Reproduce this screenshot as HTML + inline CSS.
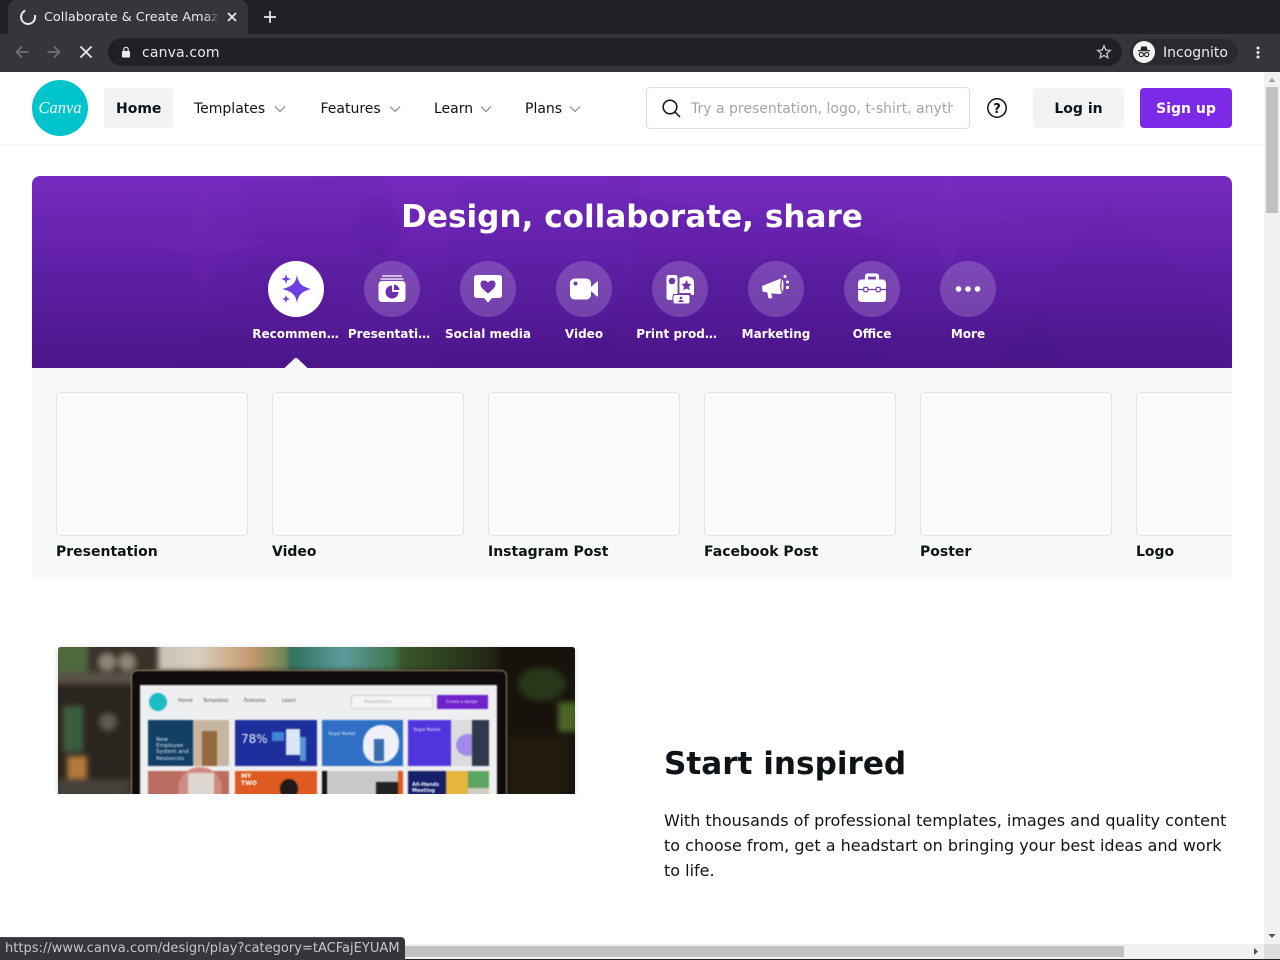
<!DOCTYPE html>
<html><head><meta charset="utf-8"><title>Canva</title>
<style>
*{box-sizing:border-box}
html,body{margin:0;padding:0;width:1280px;height:960px;overflow:hidden;background:#fff;font-family:"DejaVu Sans","Liberation Sans",sans-serif;color:#0e1318}
.a{position:absolute}
.t{position:absolute;white-space:nowrap;line-height:20px}
svg{position:absolute;overflow:visible}
.nav{font-size:14px;top:98px;color:#0e1318;line-height:20px;padding-top:1px}
.ic{position:absolute;top:261px;width:56px;height:56px;border-radius:50%;background:rgba(255,255,255,.18)}
.lb{position:absolute;top:325px;width:96px;text-align:center;font-size:12px;font-weight:700;color:#fff;line-height:18px;white-space:nowrap}
.card{position:absolute;top:392px;width:192px;height:144px;border:1px solid #e1e3e7;border-radius:4px;background:#f9fafa}
.cl{position:absolute;font-size:14px;font-weight:700;line-height:20px;color:#0e1318;white-space:nowrap}
</style></head><body>

<!-- browser chrome -->
<div class="a" style="left:0;top:0;width:1280px;height:34px;background:#202124"></div>
<div class="a" style="left:0;top:34px;width:1280px;height:38px;background:#35363a"></div>
<div class="a" style="left:8px;top:0;width:240px;height:34px;background:#35363a;border-radius:8px 8px 0 0"></div>
<svg style="left:20px;top:9px" width="16" height="16" viewBox="0 0 16 16"><path d="M 5.2 1.600 A 7 7 0 1 0 14.800 6" fill="none" stroke="#e8eaed" stroke-width="2"/></svg>
<div class="t" style="left:44px;top:8px;width:175px;overflow:hidden;font-size:12.800px;color:#e8eaed">Collaborate &amp; Create Amaz</div>
<div class="a" style="left:204px;top:6px;width:16px;height:20px;background:linear-gradient(90deg,rgba(53,54,58,0),#35363a)"></div>
<svg style="left:226px;top:11px" width="12" height="12" viewBox="0 0 12 12"><path d="M2 2L10 10M10 2L2 10" stroke="#e8eaed" stroke-width="1.700"/></svg>
<svg style="left:263px;top:10px" width="14" height="14" viewBox="0 0 14 14"><path d="M7 1V13M1 7H13" stroke="#e8eaed" stroke-width="1.700"/></svg>
<svg style="left:14px;top:44px" width="16" height="16" viewBox="0 0 16 16"><path d="M14.500 8H2.500M8 2.500L2.500 8L8 13.500" fill="none" stroke="#6f7175" stroke-width="1.700"/></svg>
<svg style="left:46px;top:44px" width="16" height="16" viewBox="0 0 16 16"><path d="M1.500 8H13.500M8 2.500L13.500 8L8 13.500" fill="none" stroke="#6f7175" stroke-width="1.700"/></svg>
<svg style="left:78px;top:44px" width="16" height="16" viewBox="0 0 16 16"><path d="M2.500 2.500L13.500 13.500M13.500 2.500L2.500 13.500" fill="none" stroke="#e8eaed" stroke-width="1.800"/></svg>
<div class="a" style="left:108px;top:38px;width:1014px;height:28px;background:#202124;border-radius:14px"></div>
<svg style="left:120px;top:46px" width="12" height="12" viewBox="0 0 12 12"><rect x="2" y="5" width="8" height="6.500" rx="1" fill="#e8eaed"/><path d="M3.800 5V3.500a2.200 2.200 0 0 1 4.400 0V5" fill="none" stroke="#e8eaed" stroke-width="1.200"/></svg>
<div class="t" style="left:142px;top:43px;font-size:14px;color:#e8eaed;letter-spacing:.15px">canva.com</div>
<svg style="left:1096px;top:44px" width="16" height="16" viewBox="0 0 16 16"><path d="M8 1.800L9.800 6L14.300 6.400L10.900 9.400L11.900 13.800L8 11.500L4.100 13.800L5.100 9.400L1.700 6.400L6.200 6Z" fill="none" stroke="#c4c6c9" stroke-width="1.300"/></svg>
<div class="a" style="left:1130px;top:39px;width:108px;height:26px;background:#292a2d;border-radius:13px"></div>
<div class="a" style="left:1133px;top:41px;width:22px;height:22px;background:#f1f3f4;border-radius:50%"></div>
<svg style="left:1133px;top:41px" width="22" height="22" viewBox="0 0 22 22"><path d="M7.500 9L8.300 5.500H13.700L14.500 9Z" fill="#202124"/><path d="M5 9.700H17" stroke="#202124" stroke-width="1.200"/><circle cx="8.300" cy="13.500" r="2.100" fill="none" stroke="#202124" stroke-width="1.100"/><circle cx="13.700" cy="13.500" r="2.100" fill="none" stroke="#202124" stroke-width="1.100"/><path d="M10.400 13.200H11.600" stroke="#202124"/></svg>
<div class="t" style="left:1163px;top:43px;font-size:14px;color:#e8eaed">Incognito</div>
<svg style="left:1256px;top:46px" width="4" height="14" viewBox="0 0 4 14"><circle cx="2" cy="2" r="1.500" fill="#e8eaed"/><circle cx="2" cy="6.500" r="1.500" fill="#e8eaed"/><circle cx="2" cy="11" r="1.500" fill="#e8eaed"/></svg>

<!-- header -->
<div class="a" style="left:0;top:72px;width:1264px;height:74px;background:#fff;border-bottom:2px solid #f6f7f8"></div>
<div class="a" style="left:32px;top:80px;width:56px;height:56px;border-radius:50%;background:#00c4cc"></div>
<div class="t" style="left:32px;top:98px;width:56px;text-align:center;font-family:'Liberation Serif',serif;font-style:italic;font-size:16.500px;color:#fff">Canva</div>
<div class="a" style="left:104px;top:88px;width:69px;height:40px;background:#f2f3f5;border-radius:4px"></div>
<div class="t nav" style="left:116px;font-weight:700">Home</div>
<div class="t nav" style="left:194px">Templates</div>
<svg style="left:274px;top:105px" width="12" height="8" viewBox="0 0 12 8"><path d="M1 1.500L6 6.500L11 1.500" fill="none" stroke="#8b8d91" stroke-width="1.200"/></svg>
<div class="t nav" style="left:320.500px">Features</div>
<svg style="left:389px;top:105px" width="12" height="8" viewBox="0 0 12 8"><path d="M1 1.500L6 6.500L11 1.500" fill="none" stroke="#8b8d91" stroke-width="1.200"/></svg>
<div class="t nav" style="left:434px">Learn</div>
<svg style="left:480px;top:105px" width="12" height="8" viewBox="0 0 12 8"><path d="M1 1.500L6 6.500L11 1.500" fill="none" stroke="#8b8d91" stroke-width="1.200"/></svg>
<div class="t nav" style="left:525px">Plans</div>
<svg style="left:569px;top:105px" width="12" height="8" viewBox="0 0 12 8"><path d="M1 1.500L6 6.500L11 1.500" fill="none" stroke="#8b8d91" stroke-width="1.200"/></svg>
<div class="a" style="left:646px;top:87px;width:324px;height:42px;border:1px solid #d9dbde;border-radius:4px;background:#fff"></div>
<svg style="left:660px;top:97px" width="22" height="22" viewBox="0 0 22 22"><circle cx="10" cy="10" r="6.800" fill="none" stroke="#0e1318" stroke-width="1.500"/><path d="M15 15L20 20" stroke="#0e1318" stroke-width="1.500"/></svg>
<div class="t" style="left:691px;top:99px;width:262px;overflow:hidden;font-size:14px;color:#a3a5a9">Try a presentation, logo, t-shirt, anything</div>
<svg style="left:986px;top:97px" width="22" height="22" viewBox="0 0 22 22"><circle cx="11" cy="11" r="9.200" fill="none" stroke="#0e1318" stroke-width="1.500"/><text x="11" y="15.800" text-anchor="middle" font-size="13" font-weight="700" font-family="DejaVu Sans" fill="#0e1318">?</text></svg>
<div class="a" style="left:1033px;top:88px;width:91px;height:40px;background:#f2f3f5;border-radius:4px"></div>
<div class="t" style="left:1033px;top:99px;width:91px;text-align:center;font-size:14px;font-weight:700">Log in</div>
<div class="a" style="left:1140px;top:88px;width:92px;height:40px;background:#7d2ae8;border-radius:4px"></div>
<div class="t" style="left:1140px;top:99px;width:92px;text-align:center;font-size:14px;font-weight:700;color:#fff">Sign up</div>

<!-- hero -->
<div class="a" style="left:32px;top:176px;width:1200px;height:192px;border-radius:8px 8px 0 0;overflow:hidden;background:linear-gradient(180deg,#762bc0 0%,#6120a8 45%,#4c1589 100%)">
<svg style="left:0;top:0" width="1200" height="192" viewBox="0 0 1200 192">
<path d="M171 5L181 55L245 67L181 79L171 135L161 79L110 67L161 55Z" fill="#8a3fd0" opacity=".08"/>
<path d="M210 5L355 0L375 100L300 140L210 190H140L215 110Z" fill="#4a1590" opacity=".08"/>
<ellipse cx="345" cy="50" rx="24" ry="30" fill="#40107f" opacity=".08"/>
<path d="M425 5L610 0L580 190H400Z" fill="#3f1080" opacity=".05"/>
<path d="M600 20L865 65L850 190H540L600 100Z" fill="#3f1080" opacity=".08"/>
<path d="M916 2L930 30L990 41L930 52L916 110L902 52L850 41L902 30Z" fill="#9a52dd" opacity=".06"/>
<path d="M1075 25L1000 120L830 150L820 190H1190V130Z" fill="#3f1080" opacity=".04"/>
<path d="M1010 130L1030 190H960Z" fill="#30086a" opacity=".08"/>
</svg></div>
<div class="t" style="left:32px;top:197px;width:1200px;text-align:center;line-height:40px;font-size:31.100px;font-weight:700;color:#fff">Design, collaborate, share</div>

<div class="ic" style="left:268px;background:#fff"></div>
<div class="ic" style="left:364px"></div>
<div class="ic" style="left:460px"></div>
<div class="ic" style="left:556px"></div>
<div class="ic" style="left:652px"></div>
<div class="ic" style="left:748px"></div>
<div class="ic" style="left:844px"></div>
<div class="ic" style="left:940px"></div>

<svg style="left:280px;top:273px" width="32" height="32" viewBox="0 0 32 32"><path d="M17 1.500C18 9.500 21 13.500 31 16C21 18.500 18 22.500 17 30.500C16 22.500 13 18.500 2 16C13 13.500 16 9.500 17 1.500Z" fill="#6d3fe0"/><path d="M6 1L7.200 4.800L11 6L7.200 7.200L6 11L4.800 7.200L1 6L4.800 4.800Z" fill="#6d3fe0"/><path d="M6 22L7.100 25L10 26L7.100 27L6 30L4.900 27L2 26L4.900 25Z" fill="#6d3fe0"/></svg>
<svg style="left:376px;top:273px" width="32" height="32" viewBox="0 0 32 32"><path d="M6 3H26M4.500 6H27.500" stroke="#fff" stroke-width="1.300"/><rect x="2.500" y="8" width="27" height="21" rx="3.500" fill="#fff"/><path d="M16 12.500A6.500 6.500 0 1 0 22.500 19H16Z" fill="#6d2fae"/><path d="M18 11.500A6 6 0 0 1 23.500 17H18Z" fill="#6d2fae"/></svg>
<svg style="left:472px;top:273px" width="32" height="32" viewBox="0 0 32 32"><path d="M5 2H27Q30 2 30 5V22Q30 25 27 25H20L16 29.500L12 25H5Q2 25 2 22V5Q2 2 5 2Z" fill="#fff"/><path d="M16 20.500C11 16.500 8.500 14 8.500 11Q8.500 7.500 12 7.500Q14.800 7.500 16 10Q17.200 7.500 20 7.500Q23.500 7.500 23.500 11C23.500 14 21 16.500 16 20.500Z" fill="#7136ad"/></svg>
<svg style="left:568px;top:273px" width="32" height="32" viewBox="0 0 32 32"><rect x="2" y="5.500" width="21" height="21" rx="4.500" fill="#fff"/><path d="M23 14L29 8.500Q30 8 30 9.500V22.500Q30 24 29 23.500L23 18Z" fill="#fff"/><circle cx="7.500" cy="10.500" r="2" fill="#7136ad"/></svg>
<svg style="left:664px;top:273px" width="32" height="32" viewBox="0 0 32 32"><path d="M5 2H11Q13.500 2 13.500 4.500V21H9V27H5Q2.500 27 2.500 24.500V4.500Q2.500 2 5 2Z" fill="#fff"/><circle cx="8" cy="8" r="3.300" fill="#7136ad"/><path d="M16 5Q24 1.500 28 5Q30 7 30 10V22H27V20H15.500V6Q15.500 5 16 5Z" fill="#fff"/><path d="M22.500 6.800L24 10.500L27.500 11L25 13.600L25.700 17.200L22.500 15.500L19.300 17.200L20 13.600L17.500 11L21 10.500Z" fill="#7136ad"/><rect x="9" y="21.500" width="17" height="9.500" rx="2" fill="#fff" stroke="#7136ad" stroke-width="1"/><circle cx="17" cy="25" r="1.400" fill="#7136ad"/><path d="M14.500 29H19.500V28Q17 26 14.500 28Z" fill="#7136ad"/></svg>
<svg style="left:760px;top:273px" width="32" height="32" viewBox="0 0 32 32"><path d="M2 13L21 5.500L24 19L20 21L11 20.500L12.500 24.500Q10.500 26.500 8 24.500L7.500 19.500L2.500 18.500Z" fill="#fff"/><ellipse cx="22.500" cy="12.500" rx="2.300" ry="7.500" fill="#7136ad"/><ellipse cx="22.500" cy="12.500" rx="1" ry="6" fill="#fff"/><circle cx="25" cy="3.500" r="1.500" fill="#fff"/><circle cx="27.500" cy="9" r="1.500" fill="#fff"/><rect x="26" y="13" width="3" height="3" fill="#fff"/></svg>
<svg style="left:856px;top:273px" width="32" height="32" viewBox="0 0 32 32"><path d="M10.500 7V3.500Q10.500 2 12.500 2H19.500Q21.500 2 21.500 3.500V7" fill="none" stroke="#fff" stroke-width="3.200"/><rect x="2" y="6.500" width="28" height="22.500" rx="3.500" fill="#fff"/><path d="M2 16.500H30" stroke="#7136ad" stroke-width="1.200"/><rect x="7.800" y="14.300" width="4" height="4.500" rx="1" fill="#fff" stroke="#7136ad" stroke-width="1.100"/><rect x="20.200" y="14.300" width="4" height="4.500" rx="1" fill="#fff" stroke="#7136ad" stroke-width="1.100"/></svg>
<svg style="left:952px;top:273px" width="32" height="32" viewBox="0 0 32 32"><circle cx="6.500" cy="16" r="2.800" fill="#fff"/><circle cx="16" cy="16" r="2.800" fill="#fff"/><circle cx="25.500" cy="16" r="2.800" fill="#fff"/></svg>

<div class="lb" style="left:247.500px">Recommen…</div>
<div class="lb" style="left:341px">Presentati…</div>
<div class="lb" style="left:440px">Social media</div>
<div class="lb" style="left:536px">Video</div>
<div class="lb" style="left:628.500px">Print prod…</div>
<div class="lb" style="left:728px">Marketing</div>
<div class="lb" style="left:824px">Office</div>
<div class="lb" style="left:920px">More</div>

<!-- panel -->
<div class="a" style="left:32px;top:368px;width:1200px;height:212px;background:#f8f9f9;border-radius:0 0 8px 8px;overflow:hidden">
<div class="card" style="left:24px;top:24px"></div>
<div class="card" style="left:240px;top:24px"></div>
<div class="card" style="left:456px;top:24px"></div>
<div class="card" style="left:672px;top:24px"></div>
<div class="card" style="left:888px;top:24px"></div>
<div class="card" style="left:1104px;top:24px"></div>
<div class="cl" style="left:24px;top:174px">Presentation</div>
<div class="cl" style="left:240px;top:174px">Video</div>
<div class="cl" style="left:456px;top:174px">Instagram Post</div>
<div class="cl" style="left:672px;top:174px">Facebook Post</div>
<div class="cl" style="left:888px;top:174px">Poster</div>
<div class="cl" style="left:1104px;top:174px">Logo</div>
</div>
<svg style="left:284px;top:357px" width="24" height="11" viewBox="0 0 24 11"><path d="M0.500 11L10.500 1.500Q12 0.300 13.500 1.500L23.500 11Z" fill="#f8f9f9"/></svg>

<!-- laptop image -->
<div class="a" style="left:40px;top:630px;width:555px;height:164px;overflow:hidden">
<div class="a" style="left:18px;top:18px;width:517px;height:160px;border-radius:3px;box-shadow:0 0 6px rgba(0,0,0,.16)"></div>
<div class="a" style="left:18px;top:17px;width:517px;height:147px;overflow:hidden;border-radius:3px 3px 0 0;background:#17110c">
 <div class="a" style="left:0;top:0;width:517px;height:147px;filter:blur(3px)">
  <div class="a" style="left:-6px;top:-6px;width:110px;height:160px;background:#3a322a"></div>
  <div class="a" style="left:-6px;top:-6px;width:36px;height:32px;background:#4e6a3c"></div>
  <div class="a" style="left:-6px;top:25px;width:110px;height:12px;background:#5a5248"></div>
  <div class="a" style="left:-6px;top:37px;width:110px;height:120px;background:#2b251f"></div>
  <div class="a" style="left:5px;top:59px;width:20px;height:46px;background:#3a5f3e"></div>
  <div class="a" style="left:9px;top:109px;width:20px;height:30px;background:#b57a3a"></div>
  <div class="a" style="left:-2px;top:132px;width:74px;height:20px;background:#45403a"></div>
  <div class="a" style="left:40px;top:6px;width:18px;height:18px;border-radius:50%;background:#8c8676"></div>
  <div class="a" style="left:60px;top:6px;width:18px;height:18px;border-radius:50%;background:#8c8676"></div>
  <div class="a" style="left:41px;top:66px;width:18px;height:18px;border-radius:50%;background:#5e5a50"></div>
  <div class="a" style="left:100px;top:-6px;width:130px;height:30px;background:linear-gradient(90deg,#c8c2b5,#d8cfc0 30%,#c79c70 70%,#6b8452)"></div>
  <div class="a" style="left:230px;top:-6px;width:110px;height:30px;background:linear-gradient(90deg,#2e6e5c,#5b9c9d 50%,#3e7346)"></div>
  <div class="a" style="left:340px;top:-6px;width:110px;height:30px;background:linear-gradient(90deg,#3a5a2b,#1e1c10)"></div>
  <div class="a" style="left:440px;top:-6px;width:90px;height:165px;background:#17120b"></div>
  <div class="a" style="left:460px;top:20px;width:48px;height:34px;border-radius:50%;background:#26371a"></div>
  <div class="a" style="left:500px;top:55px;width:20px;height:30px;background:#4a6426"></div>
  <div class="a" style="left:450px;top:90px;width:60px;height:60px;background:#221a0e"></div>
 </div>
 <div class="a" style="left:0;top:0;width:517px;height:147px;filter:blur(.8px)">
  <div class="a" style="left:73px;top:23px;width:376px;height:130px;border:1.500px solid #a38c6c;border-radius:6px 6px 0 0;background:#100b0a"></div>
  <div class="a" style="left:82px;top:38px;width:357px;height:112px;background:#eeeff0"></div>
  <div class="a" style="left:91px;top:46px;width:18px;height:18px;border-radius:50%;background:#1cbcc4"></div>
  <div class="a" style="left:293px;top:48px;width:82px;height:14px;background:#f4f4f4;border:1px solid #cfcfcf"></div>
  <div class="a" style="left:379px;top:48px;width:51px;height:14px;background:#6e22cc"></div>
  <div class="a" style="left:90px;top:73px;width:81px;height:46px;background:#123f66"></div>
  <div class="a" style="left:135px;top:73px;width:36px;height:46px;background:#c6b6a0"></div>
  <div class="a" style="left:144px;top:84px;width:15px;height:35px;background:#96683d"></div>
  <div class="a" style="left:177px;top:73px;width:82px;height:46px;background:#1c2f9c"></div>
  <div class="a" style="left:228px;top:82px;width:14px;height:26px;background:#dde6f5"></div>
  <div class="a" style="left:214px;top:85px;width:12px;height:9px;background:#3f86d6"></div>
  <div class="a" style="left:242px;top:90px;width:6px;height:24px;background:#5593d8"></div>
  <div class="a" style="left:264px;top:73px;width:81px;height:46px;background:#2f6fc4"></div>
  <div class="a" style="left:305px;top:78px;width:36px;height:38px;border-radius:50% 45% 50% 40%;background:#eef2f8"></div>
  <div class="a" style="left:316px;top:92px;width:10px;height:22px;background:#3a6cae"></div>
  <div class="a" style="left:350px;top:73px;width:81px;height:46px;background:#dcdcde"></div>
  <div class="a" style="left:350px;top:73px;width:43px;height:46px;background:#4f35dd"></div>
  <div class="a" style="left:398px;top:87px;width:24px;height:22px;border-radius:50%;background:#a08ae6"></div>
  <div class="a" style="left:414px;top:73px;width:17px;height:46px;background:#30384c"></div>
  <div class="a" style="left:90px;top:124px;width:81px;height:30px;background:#b96d60"></div>
  <div class="a" style="left:120px;top:120px;width:44px;height:44px;border-radius:50%;background:#cf8c84"></div>
  <div class="a" style="left:130px;top:126px;width:26px;height:26px;background:#ded7cf"></div>
  <div class="a" style="left:177px;top:124px;width:82px;height:30px;background:#de5a20"></div>
  <div class="a" style="left:222px;top:132px;width:18px;height:20px;border-radius:50%;background:#1f1a18"></div>
  <div class="a" style="left:264px;top:124px;width:81px;height:30px;background:#c9c9c9"></div>
  <div class="a" style="left:264px;top:124px;width:5px;height:30px;background:#15120f"></div>
  <div class="a" style="left:340px;top:124px;width:5px;height:30px;background:#de5a20"></div>
  <div class="a" style="left:318px;top:135px;width:22px;height:15px;background:#222"></div>
  <div class="a" style="left:350px;top:124px;width:38px;height:30px;background:#16206a"></div>
  <div class="a" style="left:388px;top:124px;width:22px;height:30px;background:#e6b63c"></div>
  <div class="a" style="left:410px;top:124px;width:21px;height:17px;background:#5da563"></div>
  <div class="a" style="left:410px;top:141px;width:21px;height:10px;background:#d0cdc4"></div>
 </div>
 <div class="a" style="left:0;top:0;width:517px;height:147px;filter:blur(.5px)">
  <div class="t" style="left:120px;top:51px;font-size:5px;line-height:6px;color:#555">Home</div>
  <div class="t" style="left:145px;top:51px;font-size:5px;line-height:6px;color:#555">Templates</div>
  <div class="t" style="left:186px;top:51px;font-size:5px;line-height:6px;color:#555">Features</div>
  <div class="t" style="left:224px;top:51px;font-size:5px;line-height:6px;color:#555">Learn</div>
  <div class="t" style="left:306px;top:52px;font-size:4px;line-height:6px;color:#aaa">Presentations</div>
  <div class="t" style="left:388px;top:52px;font-size:4px;line-height:6px;color:#e8dcf8">Create a design</div>
  <div class="t" style="left:98px;top:90px;font-size:5.500px;line-height:6.200px;color:#dfe8ee">New<br>Employee<br>System and<br>Resources</div>
  <div class="t" style="left:183px;top:85px;font-size:12px;line-height:14px;color:#f2f4fb">78%</div>
  <div class="t" style="left:270px;top:84px;font-size:4px;line-height:5px;color:#e9eff8">Target Market</div>
  <div class="t" style="left:355px;top:80px;font-size:4px;line-height:5px;color:#e9eff8">Target Market</div>
  <div class="t" style="left:354px;top:135px;font-size:5px;line-height:6px;font-weight:700;color:#f0f2fa">All-Hands<br>Meeting</div>
  <div class="t" style="left:183px;top:126px;font-size:6px;line-height:7px;color:#fff;font-weight:700">MY<br>TWO</div>
 </div>
</div>
</div>

<!-- text -->
<div class="t" style="left:664px;top:744px;font-size:31.100px;line-height:40px;font-weight:700;color:#0e1318">Start inspired</div>
<div class="t" style="left:664px;top:808px;font-size:16px;line-height:25px;color:#0e1318">With thousands of professional templates, images and quality content<br>to choose from, get a headstart on bringing your best ideas and work<br>to life.</div>

<!-- scrollbars -->
<div class="a" style="left:1264px;top:72px;width:16px;height:888px;background:#f1f1f1"></div>
<div class="a" style="left:1266px;top:87px;width:12px;height:126px;background:#c1c1c1"></div>
<svg style="left:1264px;top:72px" width="16" height="16" viewBox="0 0 16 16"><path d="M4.500 10L8 6L11.500 10Z" fill="#a3a3a3"/></svg>
<svg style="left:1264px;top:928px" width="16" height="16" viewBox="0 0 16 16"><path d="M4.500 6L8 10L11.500 6Z" fill="#505050"/></svg>
<div class="a" style="left:0;top:944px;width:1264px;height:16px;background:#f1f1f1"></div>
<div class="a" style="left:0;top:946px;width:1124px;height:11px;background:#c1c1c1"></div>
<svg style="left:1248px;top:944px" width="16" height="16" viewBox="0 0 16 16"><path d="M6 4L10 7.500L6 11Z" fill="#505050"/></svg>
<div class="a" style="left:1264px;top:944px;width:16px;height:16px;background:#dcdcdc"></div>
<div class="a" style="left:0;top:959px;width:1280px;height:1px;background:#202124"></div>

<!-- status bubble -->
<div class="a" style="left:0;top:937px;width:405px;height:23px;background:#35363a;border-radius:0 4px 0 0;border-top:1px solid #4a4b4f"></div>
<div class="t" style="left:5px;top:939px;font-size:13px;letter-spacing:.02px;color:#c5c7ca">https://www.canva.com/design/play?category=tACFajEYUAM</div>

</body></html>
